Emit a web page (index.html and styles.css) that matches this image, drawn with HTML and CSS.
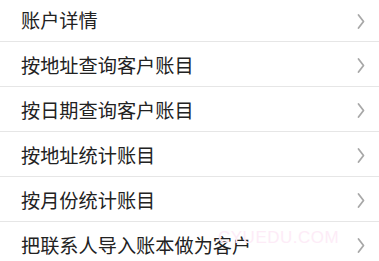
FILE: index.html
```html
<!DOCTYPE html>
<html lang="zh">
<head>
<meta charset="utf-8">
<link rel="stylesheet" href="styles.css">
</head>
<body>
<ul class="menu">
  <li class="item"><span class="label">账户详情</span><svg class="chev" viewBox="0 0 8 16"><path d="M1.5 1.5 L6.5 8 L1.5 14.5"/></svg></li>
  <li class="item"><span class="label">按地址查询客户账目</span><svg class="chev" viewBox="0 0 8 16"><path d="M1.5 1.5 L6.5 8 L1.5 14.5"/></svg></li>
  <li class="item"><span class="label">按日期查询客户账目</span><svg class="chev" viewBox="0 0 8 16"><path d="M1.5 1.5 L6.5 8 L1.5 14.5"/></svg></li>
  <li class="item"><span class="label">按地址统计账目</span><svg class="chev" viewBox="0 0 8 16"><path d="M1.5 1.5 L6.5 8 L1.5 14.5"/></svg></li>
  <li class="item"><span class="label">按月份统计账目</span><svg class="chev" viewBox="0 0 8 16"><path d="M1.5 1.5 L6.5 8 L1.5 14.5"/></svg></li>
  <li class="item"><span class="label">把联系人导入账本做为客户</span><svg class="chev" viewBox="0 0 8 16"><path d="M1.5 1.5 L6.5 8 L1.5 14.5"/></svg></li>
</ul>
<div class="watermark">CYUEDU.COM</div>
</body>
</html>
```
FILE: styles.css
```css
html, body {
  margin: 0;
  padding: 0;
  background: #ffffff;
  overflow: hidden;
}
body {
  position: relative;
  width: 379px;
  height: 261px;
  font-family: "Noto Sans CJK SC", "Noto Sans", sans-serif;
}
.menu {
  list-style: none;
  margin: -2px 0 0 0;
  padding: 0;
}
.item {
  display: flex;
  align-items: center;
  justify-content: space-between;
  height: 44px;
  border-bottom: 1px solid #e6e6e6;
  padding: 0 14px 0 21px;
}
.item:first-child {
  height: 43px;
}
.label {
  font-size: 19.2px;
  color: #222222;
  line-height: 1;
  padding-top: 3px;
}
.chev {
  width: 8px;
  height: 17px;
  margin-top: 3px;
  fill: none;
  stroke: #a8a8a8;
  stroke-width: 1.8;
  stroke-linecap: round;
  stroke-linejoin: round;
}
.watermark {
  position: absolute;
  left: 218px;
  top: 228px;
  font-family: "Liberation Sans", sans-serif;
  font-size: 17px;
  color: #fdecf7;
  letter-spacing: 0.5px;
  pointer-events: none;
}
```
